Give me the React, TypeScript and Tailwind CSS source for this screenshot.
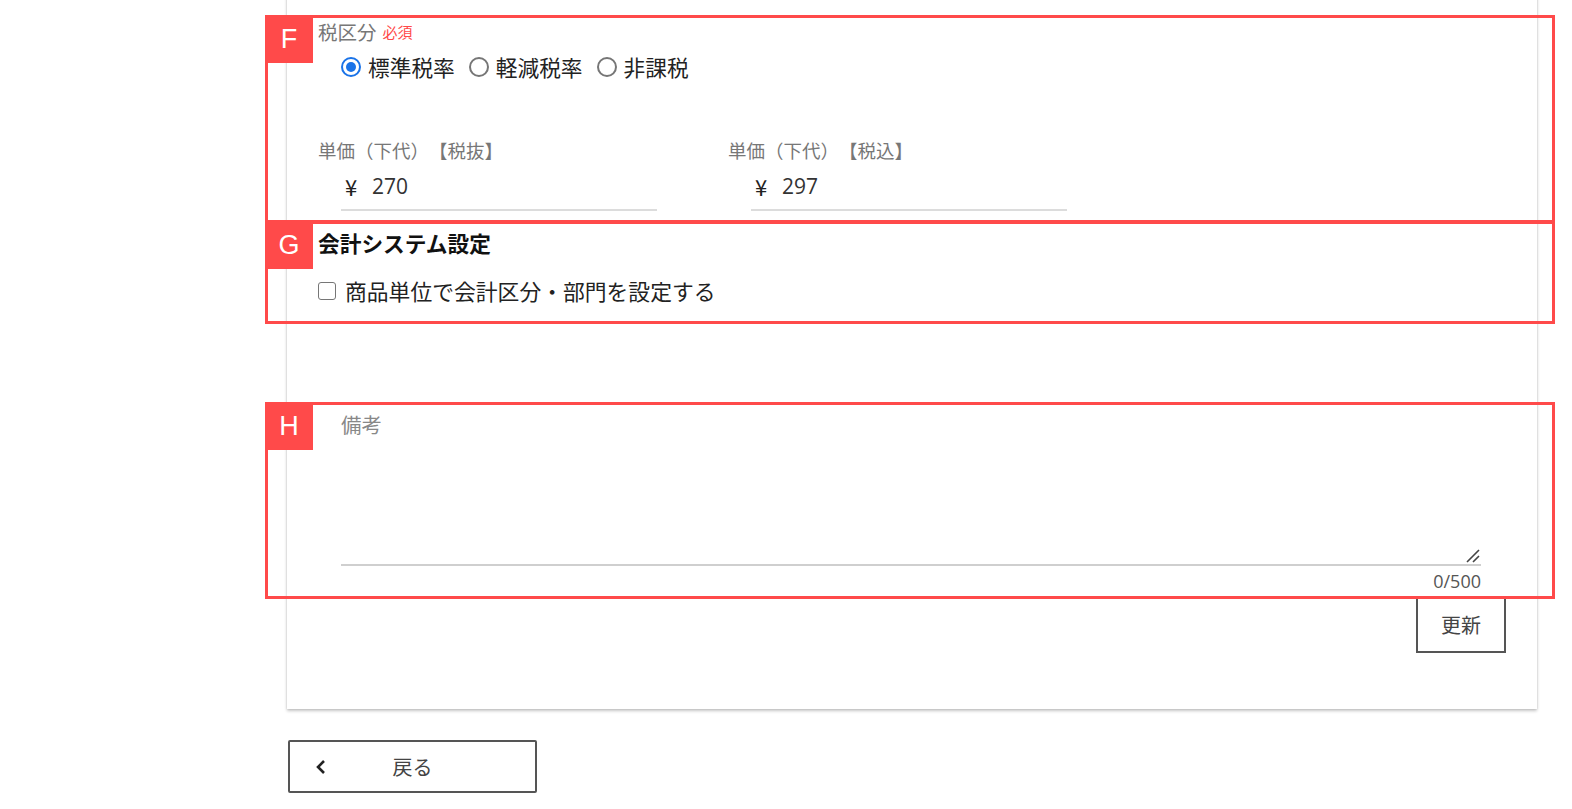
import React from "react";

const FONT = "font-['Noto_Sans_CJK_JP','Noto_Sans',sans-serif] [text-spacing-trim:space-all]";

function Radio({ label, checked }: { label: string; checked?: boolean }) {
  return (
    <label className="flex items-center gap-[7px]">
      <span
        className={
          checked
            ? "flex h-[20px] w-[20px] items-center justify-center rounded-full border-2 border-[#1a73e8]"
            : "flex h-[20px] w-[20px] items-center justify-center rounded-full border-2 border-[#767676]"
        }
      >
        {checked ? <span className="h-[10px] w-[10px] rounded-full bg-[#1a73e8]" /> : null}
      </span>
      <span className="text-[21.7px] leading-[24px] text-[#222]">{label}</span>
    </label>
  );
}

function PriceField({ label, value }: { label: string; value: string }) {
  return (
    <div className="w-[410px]">
      <div className="h-[24px] text-[18.5px] leading-[24px] text-[#777]">{label}</div>
      <div className="ml-[23px] flex w-[316px] items-center border-b-2 border-[#dcdcdc] pb-[11px] pl-[4px] pt-[12px] leading-[24px] text-[#333]">
        <span className="w-[27px] text-[22px] text-[#222]">¥</span>
        <span className="font-['Open_Sans',sans-serif] text-[21px]">{value}</span>
      </div>
    </div>
  );
}

function Marker({ letter, className }: { letter: string; className: string }) {
  return (
    <div className={`pointer-events-none absolute left-[265px] w-[1290px] border-[3px] border-[#ff4a4a] ${className}`}>
      <div className="absolute -left-[3px] -top-[3px] flex h-[48px] w-[48px] items-center justify-center bg-[#ff4a4a] font-['Liberation_Sans',sans-serif] text-[27px] text-white">
        {letter}
      </div>
    </div>
  );
}

export default function App() {
  return (
    <div className={`relative min-h-[809px] w-full overflow-hidden bg-white ${FONT}`}>
      <div className="flex">
        <div className="w-[287px] shrink-0" />
        <div className="w-[1250px]">
          <section className="-mt-[10px] bg-white pb-[56px] pl-[31px] pr-[31px] pt-[30px] shadow-[0_2px_3px_0_rgba(0,0,0,0.22),0_0_2px_0_rgba(0,0,0,0.12)]">
            <div className="flex h-[24px] items-center gap-[6px] leading-[24px]">
              <span className="text-[19.5px] text-[#777]">税区分</span>
              <span className="text-[15px] text-[#ff4a4a]">必須</span>
            </div>
            <div className="ml-[23px] mt-[5px] flex h-[36px] items-center gap-[14px]">
              <Radio label="標準税率" checked />
              <Radio label="軽減税率" />
              <Radio label="非課税" />
            </div>

            <div className="mt-[53px] flex">
              <PriceField label="単価（下代）【税抜】" value="270" />
              <PriceField label="単価（下代）【税込】" value="297" />
            </div>

            <h2 className="mt-[20px] h-[24px] text-[21.7px] font-bold leading-[24px] text-[#111]">会計システム設定</h2>
            <label className="mt-[24px] flex h-[24px] items-center gap-[9px]">
              <span className="h-[18px] w-[18px] rounded-[3px] border border-[#767676] bg-white" />
              <span className="text-[21.8px] leading-[24px] text-[#222]">商品単位で会計区分・部門を設定する</span>
            </label>

            <div className="ml-[23px] mt-[109px] w-[1140px]">
              <div className="h-[24px] text-[20.5px] leading-[24px] text-[#888]">備考</div>
              <div className="relative h-[130px] border-b-2 border-[#cfcfcf]">
                <svg className="absolute bottom-[1px] right-[1px]" width="16" height="16" viewBox="0 0 16 16">
                  <path d="M3 15 L15 3 M9 15 L15 9" stroke="#444" strokeWidth="1.6" fill="none" />
                </svg>
              </div>
              <div className="mt-[5px] h-[20px] text-right font-['Open_Sans',sans-serif] text-[18px] leading-[20px] text-[#555]">0/500</div>
            </div>

            <div className="mt-[6px] flex justify-end">
              <button className="h-[56px] w-[90px] border-2 border-[#555] bg-white text-[20px] text-[#444]">更新</button>
            </div>
          </section>

          <button className="relative ml-[1px] mt-[31px] flex h-[53px] w-[249px] items-center justify-center rounded-[2px] border-2 border-[#555] bg-white text-[20px] text-[#444]">
            <svg className="absolute left-[24px] top-[17px]" width="14" height="16" viewBox="0 0 14 16">
              <path d="M10 2 L4 8 L10 14" stroke="#222" strokeWidth="2.6" fill="none" />
            </svg>
            戻る
          </button>
        </div>
      </div>

      <Marker letter="F" className="top-[15px] h-[208px]" />
      <Marker letter="G" className="top-[221px] h-[103px]" />
      <Marker letter="H" className="top-[402px] h-[197px]" />
    </div>
  );
}
